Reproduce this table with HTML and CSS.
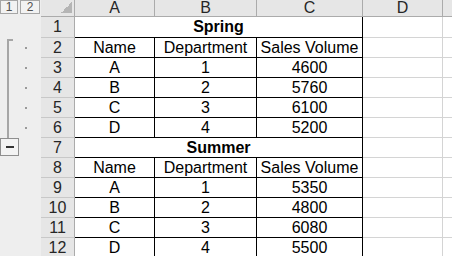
FILE: index.html
```html
<!DOCTYPE html>
<html>
<head>
<meta charset="utf-8">
<link rel="stylesheet" href="styles.css">
</head>
<body>
<div class="sheet">
  <!-- header row -->
  <div class="ol ol-head"><span class="lvl lvl1">1</span><span class="lvl lvl2">2</span></div>
  <div class="corner"><span class="tri"></span></div>
  <div class="ch">A</div>
  <div class="ch">B</div>
  <div class="ch">C</div>
  <div class="ch">D</div>
  <div class="ch ch-e"></div>

  <!-- row 1 -->
  <div class="ol"></div>
  <div class="rh">1</div>
  <div class="title">Spring</div>
  <div class="g"></div>
  <div class="g ge"></div>

  <!-- row 2 -->
  <div class="ol"><span class="bar bar-top"></span><span class="dot"></span></div>
  <div class="rh">2</div>
  <div class="c">Name</div>
  <div class="c">Department</div>
  <div class="c">Sales Volume</div>
  <div class="g"></div>
  <div class="g ge"></div>

  <!-- row 3 -->
  <div class="ol"><span class="bar"></span><span class="dot"></span></div>
  <div class="rh">3</div>
  <div class="c">A</div>
  <div class="c">1</div>
  <div class="c">4600</div>
  <div class="g"></div>
  <div class="g ge"></div>

  <!-- row 4 -->
  <div class="ol"><span class="bar"></span><span class="dot"></span></div>
  <div class="rh">4</div>
  <div class="c">B</div>
  <div class="c">2</div>
  <div class="c">5760</div>
  <div class="g"></div>
  <div class="g ge"></div>

  <!-- row 5 -->
  <div class="ol"><span class="bar"></span><span class="dot"></span></div>
  <div class="rh">5</div>
  <div class="c">C</div>
  <div class="c">3</div>
  <div class="c">6100</div>
  <div class="g"></div>
  <div class="g ge"></div>

  <!-- row 6 -->
  <div class="ol"><span class="bar"></span><span class="dot"></span></div>
  <div class="rh">6</div>
  <div class="c">D</div>
  <div class="c">4</div>
  <div class="c">5200</div>
  <div class="g"></div>
  <div class="g ge"></div>

  <!-- row 7 -->
  <div class="ol"><span class="minus"><span class="minus-line"></span></span></div>
  <div class="rh">7</div>
  <div class="title">Summer</div>
  <div class="g"></div>
  <div class="g ge"></div>

  <!-- row 8 -->
  <div class="ol"></div>
  <div class="rh">8</div>
  <div class="c">Name</div>
  <div class="c">Department</div>
  <div class="c">Sales Volume</div>
  <div class="g"></div>
  <div class="g ge"></div>

  <!-- row 9 -->
  <div class="ol"></div>
  <div class="rh">9</div>
  <div class="c">A</div>
  <div class="c">1</div>
  <div class="c">5350</div>
  <div class="g"></div>
  <div class="g ge"></div>

  <!-- row 10 -->
  <div class="ol"></div>
  <div class="rh">10</div>
  <div class="c">B</div>
  <div class="c">2</div>
  <div class="c">4800</div>
  <div class="g"></div>
  <div class="g ge"></div>

  <!-- row 11 -->
  <div class="ol"></div>
  <div class="rh">11</div>
  <div class="c">C</div>
  <div class="c">3</div>
  <div class="c">6080</div>
  <div class="g"></div>
  <div class="g ge"></div>

  <!-- row 12 -->
  <div class="ol"></div>
  <div class="rh">12</div>
  <div class="c">D</div>
  <div class="c">4</div>
  <div class="c">5500</div>
  <div class="g"></div>
  <div class="g ge"></div>
</div>
</body>
</html>
```

FILE: styles.css
```css
* { box-sizing: border-box; }
html, body {
  margin: 0;
  padding: 0;
  background: #ffffff;
  overflow: hidden;
}
body {
  font-family: "Liberation Sans", Arial, sans-serif;
  font-size: 16px;
  color: #000;
}
.sheet {
  display: grid;
  grid-template-columns: 41px 34px 80px 102px 106px 80px 1fr;
  grid-template-rows: 17px 21px repeat(11, 20px);
  width: 452px;
  height: 256px;
  overflow: hidden;
}

/* outline pane */
.ol {
  background: #eeeeee;
  display: flex;
  align-items: stretch;
}
.ol-head {
  align-items: flex-start;
  gap: 2px;
}
.lvl {
  display: flex;
  align-items: center;
  justify-content: center;
  height: 14px;
  border: 1px solid #a6a6a6;
  background: #f2f2f2;
  color: #505050;
  font-size: 12px;
  line-height: 12px;
}
.lvl1 { width: 18px; }
.lvl2 { width: 20px; }

.bar {
  width: 2px;
  margin-left: 7px;
  background: #a6a6a6;
  flex: none;
}
.bar-top {
  width: 6px;
  margin-top: 1px;
  background: transparent;
  border-left: 2px solid #a6a6a6;
  border-top: 2px solid #a6a6a6;
}
.ol .dot {
  width: 2px;
  height: 2px;
  background: #9a9a9a;
  align-self: center;
  margin-left: 16px;
  flex: none;
}
.ol .bar-top + .dot {
  margin-left: 12px;
}
.minus {
  display: flex;
  align-items: center;
  justify-content: center;
  width: 19px;
  height: 18px;
  border: 1px solid #8f8f8f;
  background: #f3f3f3;
  align-self: flex-start;
}
.minus-line {
  width: 8px;
  height: 2px;
  background: #333333;
}

/* headers */
.corner {
  background: #e6e6e6;
  border-right: 1px solid #ababab;
  border-bottom: 1px solid #ababab;
  display: flex;
  align-items: flex-end;
  justify-content: flex-end;
  padding: 0 2px 3px 0;
}
.tri {
  width: 11px;
  height: 11px;
  background: linear-gradient(to bottom right, transparent 50%, #b5b5b5 50%);
}
.ch {
  background: #e6e6e6;
  border-right: 1px solid #ababab;
  border-bottom: 1px solid #ababab;
  display: flex;
  justify-content: center;
  align-items: flex-start;
  line-height: 15px;
  color: #262626;
}
.ch-e { border-right: none; }
.rh {
  background: #e6e6e6;
  border-right: 1px solid #ababab;
  border-bottom: 1px solid #c8c8c8;
  display: flex;
  justify-content: center;
  align-items: center;
  color: #262626;
}

/* data cells */
.c {
  border-right: 1px solid #000;
  border-bottom: 1px solid #000;
  display: flex;
  justify-content: center;
  align-items: center;
  white-space: nowrap;
}
.title {
  grid-column: span 3;
  border-right: 1px solid #000;
  border-bottom: 1px solid #000;
  display: flex;
  justify-content: center;
  align-items: center;
  font-weight: bold;
}
.g {
  border-right: 1px solid #d4d4d4;
  border-bottom: 1px solid #d4d4d4;
}
.ge { border-right: none; }
```
